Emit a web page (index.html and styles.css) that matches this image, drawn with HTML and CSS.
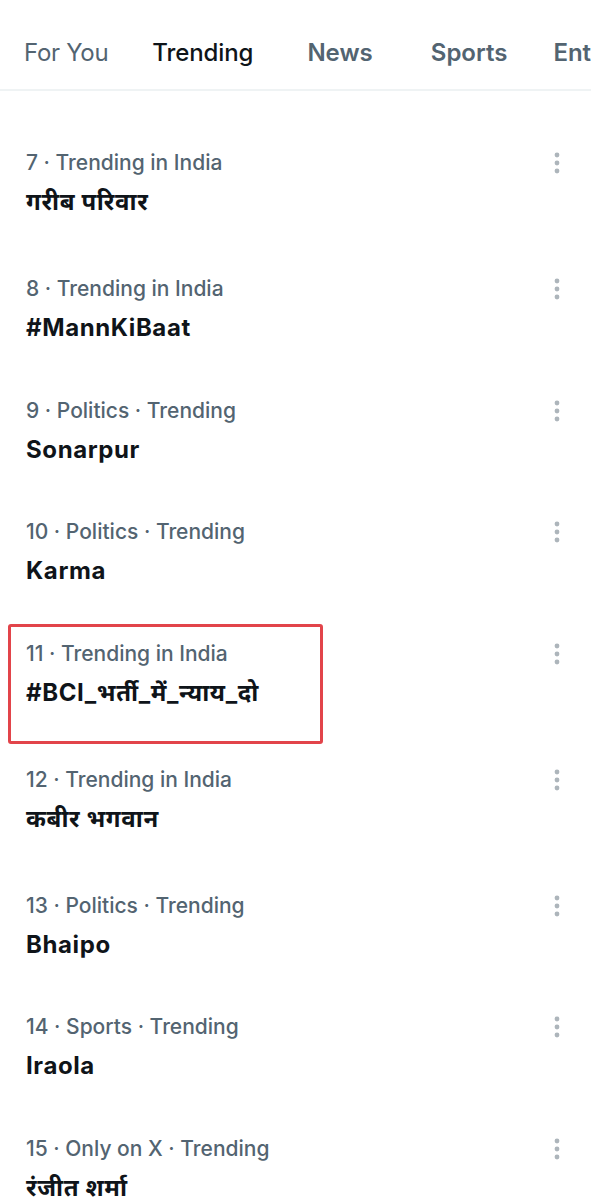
FILE: index.html
```html
<!DOCTYPE html>
<html lang="en">
<head>
  <meta charset="UTF-8">
  <meta name="viewport" content="width=device-width, initial-scale=1.0">
  <title>Trending</title>
  <link rel="stylesheet" href="styles.css">
</head>
<body>
  <header class="tabs">
    <div class="tab">For You</div>
    <div class="tab active">Trending</div>
    <div class="tab strong">News</div>
    <div class="tab strong">Sports</div>
    <div class="tab strong">Entertainment</div>
  </header>

  <main class="trend-list">
    <div class="trend tall">
      <div class="trend-text">
        <div class="meta">7 · Trending in India</div>
        <div class="title">गरीब परिवार</div>
      </div>
      <svg class="more" viewBox="0 0 20 24"><circle cx="10" cy="4" r="2.4"/><circle cx="10" cy="12" r="2.4"/><circle cx="10" cy="20" r="2.4"/></svg>
    </div>

    <div class="trend">
      <div class="trend-text">
        <div class="meta">8 · Trending in India</div>
        <div class="title">#MannKiBaat</div>
      </div>
      <svg class="more" viewBox="0 0 20 24"><circle cx="10" cy="4" r="2.4"/><circle cx="10" cy="12" r="2.4"/><circle cx="10" cy="20" r="2.4"/></svg>
    </div>

    <div class="trend">
      <div class="trend-text">
        <div class="meta">9 · Politics · Trending</div>
        <div class="title">Sonarpur</div>
      </div>
      <svg class="more" viewBox="0 0 20 24"><circle cx="10" cy="4" r="2.4"/><circle cx="10" cy="12" r="2.4"/><circle cx="10" cy="20" r="2.4"/></svg>
    </div>

    <div class="trend">
      <div class="trend-text">
        <div class="meta">10 · Politics · Trending</div>
        <div class="title">Karma</div>
      </div>
      <svg class="more" viewBox="0 0 20 24"><circle cx="10" cy="4" r="2.4"/><circle cx="10" cy="12" r="2.4"/><circle cx="10" cy="20" r="2.4"/></svg>
    </div>

    <div class="trend tall">
      <div class="highlight"></div>
      <div class="trend-text">
        <div class="meta">11 · Trending in India</div>
        <div class="title">#BCI_भर्ती_में_न्याय_दो</div>
      </div>
      <svg class="more" viewBox="0 0 20 24"><circle cx="10" cy="4" r="2.4"/><circle cx="10" cy="12" r="2.4"/><circle cx="10" cy="20" r="2.4"/></svg>
    </div>

    <div class="trend tall">
      <div class="trend-text">
        <div class="meta">12 · Trending in India</div>
        <div class="title">कबीर भगवान</div>
      </div>
      <svg class="more" viewBox="0 0 20 24"><circle cx="10" cy="4" r="2.4"/><circle cx="10" cy="12" r="2.4"/><circle cx="10" cy="20" r="2.4"/></svg>
    </div>

    <div class="trend">
      <div class="trend-text">
        <div class="meta">13 · Politics · Trending</div>
        <div class="title">Bhaipo</div>
      </div>
      <svg class="more" viewBox="0 0 20 24"><circle cx="10" cy="4" r="2.4"/><circle cx="10" cy="12" r="2.4"/><circle cx="10" cy="20" r="2.4"/></svg>
    </div>

    <div class="trend">
      <div class="trend-text">
        <div class="meta">14 · Sports · Trending</div>
        <div class="title">Iraola</div>
      </div>
      <svg class="more" viewBox="0 0 20 24"><circle cx="10" cy="4" r="2.4"/><circle cx="10" cy="12" r="2.4"/><circle cx="10" cy="20" r="2.4"/></svg>
    </div>

    <div class="trend tall">
      <div class="trend-text">
        <div class="meta">15 · Only on X · Trending</div>
        <div class="title">रंजीत शर्मा</div>
      </div>
      <svg class="more" viewBox="0 0 20 24"><circle cx="10" cy="4" r="2.4"/><circle cx="10" cy="12" r="2.4"/><circle cx="10" cy="20" r="2.4"/></svg>
    </div>
  </main>
</body>
</html>
```

FILE: styles.css
```css
/* Basic Reset */
* {
  margin: 0;
  padding: 0;
  box-sizing: border-box;
}

body {
  font-family: Inter, "Noto Sans", "DejaVu Sans", sans-serif;
  background-color: #fff;
  color: #0f1419;
  width: 591px;
  overflow: hidden;
}

/* Tabs */
.tabs {
  display: flex;
  padding: 0 0 0 24px;
  height: 91px;
  border-bottom: 2px solid #eff3f4;
  white-space: nowrap;
  overflow: hidden;
}

.tab {
  position: relative;
  font-size: 24px;
  line-height: 30px;
  padding-top: 38px;
  color: #536471;
  font-weight: 400;
  letter-spacing: -0.3px;
}

.tab:nth-child(2) { margin-left: 44px; }
.tab:nth-child(3) { margin-left: 54px; }
.tab:nth-child(4) { margin-left: 58px; }
.tab:nth-child(5) { margin-left: 46px; }

.tab.strong {
  font-weight: 600;
  letter-spacing: 0;
}

.tab.active {
  color: #0f1419;
  font-weight: 500;
  letter-spacing: -0.1px;
}

.tab.active::after {
  content: "";
  position: absolute;
  left: 0;
  right: 0;
  bottom: -6px;
  height: 5px;
  border-radius: 3px;
  background-color: #1d9bf0;
}

/* Trend list */
.trend-list {
  padding-top: 32px;
}

.trend {
  position: relative;
  display: flex;
  justify-content: space-between;
  align-items: flex-start;
  padding: 26px 24px 25.5px 26px;
}

.trend.tall {
  padding-bottom: 30px;
}

.meta {
  font-size: 21px;
  line-height: 28px;
  color: #536471;
  font-weight: 500;
}

.title {
  margin-top: 8px;
  font-size: 24px;
  line-height: 34px;
  font-weight: 700;
  color: #0f1419;
  letter-spacing: 0.6px;
}

.more {
  width: 20px;
  height: 24px;
  margin-top: 2px;
  fill: #adb5bb;
}

/* Red annotation box */
.highlight {
  position: absolute;
  left: 8px;
  top: 10px;
  width: 315px;
  height: 120px;
  border: 3px solid #e2444a;
  border-radius: 3px;
}
```
